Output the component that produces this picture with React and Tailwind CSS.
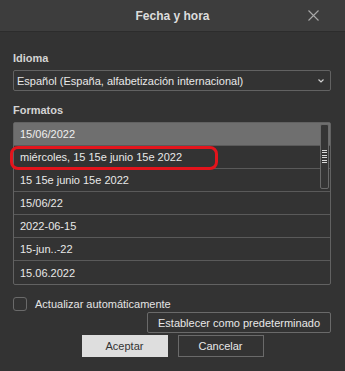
import React from "react";

const rows = [
  "15/06/2022",
  "miércoles, 15 15e junio 15e 2022",
  "15 15e junio 15e 2022",
  "15/06/22",
  "2022-06-15",
  "15-jun..-22",
  "15.06.2022",
];

export default function App() {
  return (
    <div
      className="w-[345px] h-[371px] bg-[#333333] text-[#e2e2e2] overflow-hidden"
      style={{ fontFamily: '"Liberation Sans", Arial, sans-serif' }}
    >
      <div className="h-[32px] bg-[#3d3d3d] border-b border-[#2c2c2c] flex items-center">
        <div className="w-[40px]" />
        <div className="flex-1 text-center text-[12px] font-bold text-[#dcdcdc]">Fecha y hora</div>
        <div className="w-[40px] flex items-center justify-start pl-[3px]">
          <svg width="11" height="11" viewBox="0 0 11 11">
            <path d="M0.5 0.5 L10.5 10.5 M10.5 0.5 L0.5 10.5" stroke="#a8a8a8" strokeWidth="1.1" />
          </svg>
        </div>
      </div>

      <div className="pl-[13px] pr-[14px] flex flex-col text-[11px] leading-[14px]">
        <div className="mt-[19px] h-[14px] font-bold text-[#d4d4d4]">Idioma</div>
        <div className="mt-[5px] h-[21px] border border-[#626262] rounded-[2px] flex items-center pl-[3px] pr-[6px]">
          <span className="flex-1 text-[#e8e8e8]">Español (España, alfabetización internacional)</span>
          <svg width="6" height="4" viewBox="0 0 6 4">
            <path d="M0.5 0.5 L3 3 L5.5 0.5" stroke="#cfcfcf" strokeWidth="1.2" fill="none" />
          </svg>
        </div>

        <div className="mt-[12px] h-[14px] font-bold text-[#d4d4d4]">Formatos</div>
        <div className="mt-[5px] relative border border-[#626262] rounded-[2px]">
          {rows.map((r, i) => (
            <div
              key={i}
              className={
                "h-[23px] flex items-center pl-[6px] " +
                (i < rows.length - 1 ? "border-b border-[#5a5a5a] " : "") +
                (i === 0 ? "bg-[#6f6f6f] text-[#efefef]" : "text-[#e8e8e8]")
              }
            >
              {r}
            </div>
          ))}
          <div className="absolute right-[1px] top-[1px] w-[9px] h-[65px] bg-[#353535] border border-[#6a6a6a] rounded-[2px] flex flex-col items-center justify-center gap-[1.5px]">
            {[0, 1, 2, 3, 4, 5].map((k) => (
              <div key={k} className="w-[5px] h-[1px] bg-[#d8d8d8]" />
            ))}
          </div>
          <div className="absolute left-[-4px] top-[23px] w-[208px] h-[24px] border-[3px] border-[#e3141c] rounded-[8px]" />
        </div>

        <div className="mt-[12px] h-[14px] flex items-center gap-[8px]">
          <div className="w-[14px] h-[14px] border border-[#6a6a6a] rounded-[3px]" />
          <span className="text-[#e4e4e4]">Actualizar automáticamente</span>
        </div>

        <div className="flex justify-end mt-[1px]">
          <div className="w-[184px] h-[21px] border border-[#6a6a6a] rounded-[2px] flex items-center justify-center text-[#e8e8e8]">
            Establecer como predeterminado
          </div>
        </div>

        <div className="mt-[2px] flex justify-center gap-[10px] pl-[1px]">
          <div className="w-[86px] h-[22px] bg-[#dedede] flex items-center justify-center text-[#333333]">
            Aceptar
          </div>
          <div className="w-[86px] h-[22px] border border-[#6a6a6a] flex items-center justify-center text-[#e8e8e8]">
            Cancelar
          </div>
        </div>
      </div>
    </div>
  );
}
